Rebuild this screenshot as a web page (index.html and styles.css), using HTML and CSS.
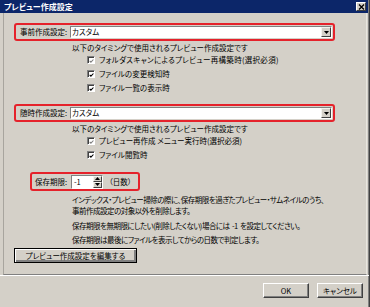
FILE: index.html
```html
<!DOCTYPE html>
<html lang="ja">
<head>
<meta charset="utf-8">
<title>プレビュー作成設定</title>
<link rel="stylesheet" href="styles.css">
</head>
<body>
<div class="dialog">
  <div class="titlebar">
    <span class="title">プレビュー作成設定</span>
    <span class="close"><svg width="7" height="6" viewBox="0 0 7 6"><path d="M1 0.5 L6 5.5 M6 0.5 L1 5.5" stroke="#000" stroke-width="1.3"/></svg></span>
  </div>
  <div class="panel">
    <div class="redbox setting first">
      <span class="label">事前作成設定:</span>
      <div class="combo"><span class="value">カスタム</span><span class="drop"><svg width="5" height="3" viewBox="0 0 5 3"><path d="M0 0 H5 L2.5 3 Z" fill="#000"/></svg></span></div>
    </div>
    <div class="desc">以下のタイミングで使用されるプレビュー作成設定です</div>
    <div class="checks">
      <div class="check wide"><span class="cb disabled"><svg width="6" height="6" viewBox="0 0 6 6"><path d="M0.8 2.8 L2.3 4.4 L5.3 1.2" fill="none" stroke="#808080" stroke-width="1.3"/></svg></span>フォルダスキャンによるプレビュー再構築時(選択必須)</div>
      <div class="check"><span class="cb"><svg width="6" height="6" viewBox="0 0 6 6"><path d="M0.8 2.8 L2.3 4.4 L5.3 1.2" fill="none" stroke="#000" stroke-width="1.3"/></svg></span>ファイルの変更検知時</div>
      <div class="check"><span class="cb"><svg width="6" height="6" viewBox="0 0 6 6"><path d="M0.8 2.8 L2.3 4.4 L5.3 1.2" fill="none" stroke="#000" stroke-width="1.3"/></svg></span>ファイル一覧の表示時</div>
    </div>
    <div class="redbox setting second">
      <span class="label">随時作成設定:</span>
      <div class="combo"><span class="value">カスタム</span><span class="drop"><svg width="5" height="3" viewBox="0 0 5 3"><path d="M0 0 H5 L2.5 3 Z" fill="#000"/></svg></span></div>
    </div>
    <div class="desc">以下のタイミングで使用されるプレビュー作成設定です</div>
    <div class="checks">
      <div class="check"><span class="cb disabled"><svg width="6" height="6" viewBox="0 0 6 6"><path d="M0.8 2.8 L2.3 4.4 L5.3 1.2" fill="none" stroke="#808080" stroke-width="1.3"/></svg></span>プレビュー再作成 メニュー実行時(選択必須)</div>
      <div class="check"><span class="cb"><svg width="6" height="6" viewBox="0 0 6 6"><path d="M0.8 2.8 L2.3 4.4 L5.3 1.2" fill="none" stroke="#000" stroke-width="1.3"/></svg></span>ファイル閲覧時</div>
    </div>
    <div class="redbox keep">
      <span class="label">保存期限:</span>
      <div class="spin"><span class="value">-1</span><span class="spinbtns"><span class="sb"><svg width="5" height="3" viewBox="0 0 5 3"><path d="M0 3 H5 L2.5 0 Z" fill="#000"/></svg></span><span class="sb"><svg width="5" height="3" viewBox="0 0 5 3"><path d="M0 0 H5 L2.5 3 Z" fill="#000"/></svg></span></span></div>
      <span class="unit">（日数）</span>
    </div>
    <div class="para">インデックス・プレビュー掃除の際に、保存期限を過ぎたプレビュー・サムネイルのうち、<br>事前作成設定の対象以外を削除します。</div>
    <div class="note n1">保存期限を無期限にしたい(削除したくない)場合には&nbsp; -1 &nbsp;を設定してください。</div>
    <div class="note n2">保存期限は最後にファイルを表示してからの日数で判定します。</div>
    <button class="btn edit">プレビュー作成設定を編集する</button>
  </div>
  <div class="footer">
    <button class="btn ok">OK</button>
    <button class="btn cancel">キャンセル</button>
  </div>
</div>
</body>
</html>
```

FILE: styles.css
```css
* { box-sizing: border-box; }
html, body { margin: 0; padding: 0; background: #d4d0c8; }
body {
  font-family: "Noto Sans CJK JP", "Noto Sans", sans-serif;
  font-size: 7.5px;
  font-feature-settings: "palt";
  color: #000;
}
.dialog {
  width: 370px;
  height: 307px;
  background: #d4d0c8;
  border-right: 1px solid #404040;
  box-shadow: inset -1px 0 0 #808080;
  display: flex;
  flex-direction: column;
  overflow: hidden;
}
.titlebar {
  height: 13px;
  margin-right: 1px;
  background: #0c2669;
  display: flex;
  align-items: center;
  justify-content: space-between;
  padding: 0 2px 0 4px;
}
.title {
  color: #fff;
  font-weight: bold;
  font-size: 8px;
  line-height: 13px;
}
.close {
  width: 10px;
  height: 9px;
  background: #d4d0c8;
  border: 1px solid;
  border-color: #fff #404040 #404040 #fff;
  display: flex;
  align-items: center;
  justify-content: center;
}
.close svg { display: block; }
.panel {
  height: 262px;
  margin: 0 2px 0 3px;
  border-left: 1px solid #a8a59e;
  border-right: 1px solid #e8e6e0;
  border-bottom: 1px solid #808080;
  display: flex;
  flex-direction: column;
  align-items: flex-start;
}
.redbox {
  border: 2px solid #e5222b;
  border-radius: 3px;
  display: flex;
  align-items: center;
}
.setting {
  width: 321px;
  height: 18px;
  margin-left: 10px;
  padding: 0 1px 0 4px;
}
.setting.first { margin-top: 10px; }
.setting.second { margin-top: 9px; }
.label { width: 50px; line-height: 10px; }
.combo {
  flex: 1;
  height: 12px;
  background: #fff;
  border: 1px solid;
  border-color: #808080 #fff #fff #808080;
  display: flex;
  align-items: center;
  justify-content: space-between;
  padding-left: 1px;
}
.value { line-height: 10px; }
.drop {
  width: 10px;
  height: 10px;
  background: #d4d0c8;
  border: 1px solid;
  border-color: #f4f3ee #404040 #404040 #f4f3ee;
  display: flex;
  align-items: center;
  justify-content: center;
}
.drop svg, .sb svg, .cb svg { display: block; }
.desc {
  margin: 2px 0 0 68px;
  line-height: 10px;
}
.check {
  margin-left: 83px;
  height: 14px;
  display: flex;
  align-items: center;
  gap: 4px;
  line-height: 10px;
}
.check.wide { letter-spacing: 0.3px; }
.cb {
  width: 8px;
  height: 8px;
  background: #fff;
  border: 1px solid;
  border-color: #808080 #fff #fff #808080;
  box-shadow: inset 1px 1px 0 #404040;
  display: flex;
  align-items: center;
  justify-content: center;
  padding: 1px 0 0 1px;
}
.keep {
  width: 110px;
  height: 19px;
  margin: 10px 0 0 26px;
  padding-left: 3px;
}
.keep .label { width: 36px; }
.spin {
  width: 32px;
  height: 14px;
  background: #fff;
  border: 1px solid;
  border-color: #808080 #fff #fff #808080;
  display: flex;
  align-items: center;
  justify-content: space-between;
  padding-left: 2px;
}
.spinbtns {
  width: 9px;
  height: 12px;
  display: flex;
  flex-direction: column;
}
.sb {
  flex: 1;
  background: #d4d0c8;
  border: 1px solid;
  border-color: #f4f3ee #404040 #404040 #f4f3ee;
  display: flex;
  align-items: center;
  justify-content: center;
}
.unit { margin-left: 6px; line-height: 10px; }
.para {
  margin: 3px 0 0 68px;
  line-height: 11px;
  letter-spacing: -0.5px;
}
.note { margin-left: 68px; line-height: 10px; letter-spacing: -0.5px; }
.n1 { margin-top: 5px; }
.n2 { margin-top: 4px; }
.btn {
  font: inherit;
  font-size: 7.5px;
  color: #000;
  background: #d4d0c8;
  padding: 0;
  line-height: 10px;
  border: 1px solid;
  border-color: #fff #404040 #404040 #fff;
  box-shadow: inset -1px -1px 0 #808080;
}
.edit {
  margin: 3px 0 0 10px;
  width: 123px;
  height: 15px;
  border-color: #000;
  box-shadow: inset 1px 1px 0 #fff, inset -2px -2px 0 #808080;
}
.footer {
  flex: 1;
  border-top: 1px solid #fff;
  display: flex;
  justify-content: flex-end;
  align-items: flex-start;
  gap: 8px;
  padding: 7px 6px 0 0;
}
.ok, .cancel { width: 46px; height: 15px; }
```
